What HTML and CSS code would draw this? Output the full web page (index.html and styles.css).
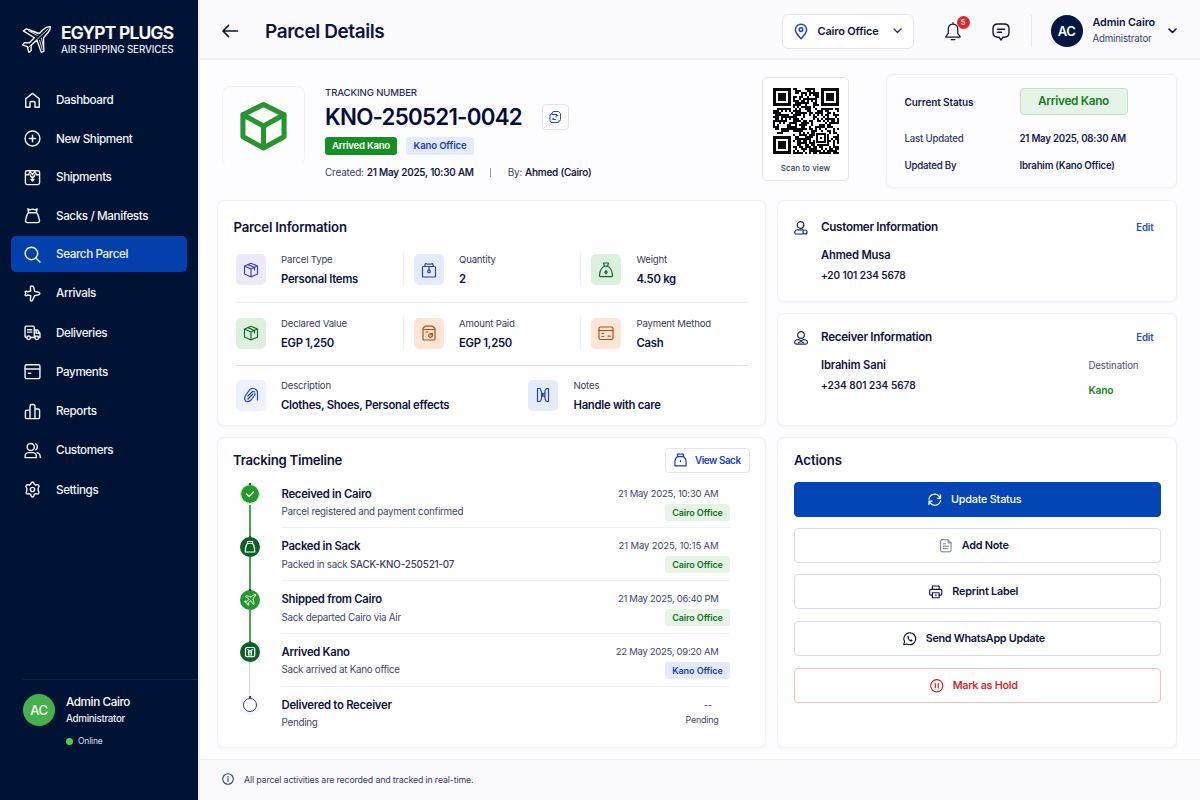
FILE: index.html
```
<!DOCTYPE html>
<html lang="en">
<head>
<meta charset="utf-8">
<title>Parcel Details</title>
<link rel="stylesheet" href="styles.css">
</head>
<body>
<div class="app">
  <aside class="sidebar">
    <div class="brand">
      <svg class="brand-logo" viewBox="0 0 92 90"><path class="w4" d="M87 4Q74 4 64 14L53 25L14 11L4 17L38 38L22 54L7 53L2 60L16 65L21 83L28 78L28 61L46 46L59 83L67 80L66 38L80 22Q88 13 87 4Z"/><path class="w3" d="M80 11L18 70M20 17L47 31M54 46L62 74M26 18L50 26M60 40L65 66"/></svg>
      <div class="brand-text">
        <div class="brand-name">EGYPT PLUGS</div>
        <div class="brand-sub">AIR SHIPPING SERVICES</div>
      </div>
    </div>
    <nav class="nav">
      <a class="nav-item"><svg class="icon" viewBox="0 0 24 24"><path d="M2.500 9.500 12 2l9.500 7.500V21.500h-6V15a1.500 1.500 0 0 0-1.500-1.500h-4A1.500 1.500 0 0 0 8.500 15v6.500h-6z"/></svg>Dashboard</a>
      <a class="nav-item"><svg class="icon" viewBox="0 0 24 24"><circle cx="12" cy="12" r="10.500"/><path d="M12 7.500v9M7.500 12h9"/></svg>New Shipment</a>
      <a class="nav-item"><svg class="icon" viewBox="0 0 24 24"><rect x="2" y="2.500" width="20" height="19.500" rx="2.500"/><path d="M2.500 8h4l2-4.500M21.500 8h-4l-2-4.500M8.500 3.500 12 8l3.500-4.500M9 8.500c0 2.500 1 3 3 3s3-.5 3-3M12 12v5M10 14.500l2 2.500 2-2.500"/></svg>Shipments</a>
      <a class="nav-item"><svg class="icon" viewBox="0 0 24 24"><path d="M5.500 2.500 8 4l4-1 4 1 2.500-1.500-1 5.500h-11zM6.500 8C5 9 3.500 12 2 19.500Q2 22 4.500 22h15q2.500 0 2.500-2.500C20.500 12 19 9 17.500 8"/></svg>Sacks / Manifests</a>
      <a class="nav-item active"><svg class="icon" viewBox="0 0 24 24"><circle cx="10.500" cy="10.500" r="8.800"/><path d="m16.800 16.800 5.700 5.700"/></svg>Search Parcel</a>
      <a class="nav-item"><svg class="icon" viewBox="0 0 24 24"><path d="M9.500 8.500 9 4Q9 1.500 11 1.500t3 2.500l1 5 4.500.800Q22.500 10.500 22.500 12t-3 2.200L15 15l-2.500 5.500Q11.800 22.500 10.300 22.500T9 20.500L9.500 15 5 14.200 3 15.500 1.500 14.500 2.500 12 1.500 9.500 3 8.500l2 1z"/></svg>Arrivals</a>
      <a class="nav-item"><svg class="icon" viewBox="0 0 24 24"><path d="M3.500 19H3a1.500 1.500 0 0 1-1.500-1.500V5A2 2 0 0 1 3.500 3h9a2 2 0 0 1 2 2v14H9.500M14.500 8.500h4.500L22.500 13v6h-1.500M5 8h6M5 11.500h6M17 9v4h5"/><circle cx="6.500" cy="19.500" r="2.500"/><circle cx="18" cy="19.500" r="2.500"/></svg>Deliveries</a>
      <a class="nav-item"><svg class="icon" viewBox="0 0 24 24"><rect x="1.500" y="2.500" width="21" height="19.500" rx="2"/><path d="M2 8.500h20M6.500 14.500h3"/></svg>Payments</a>
      <a class="nav-item"><svg class="icon" viewBox="0 0 24 24"><path d="M8.500 22V4.500a2.500 2.500 0 0 1 2.500-2.500h2a2.500 2.500 0 0 1 2.500 2.500V22M8.500 10H4a2 2 0 0 0-2 2v8.500A1.500 1.500 0 0 0 3.500 22h17a1.500 1.500 0 0 0 1.500-1.500V10.500A2 2 0 0 0 20 8.500h-4.500"/></svg>Reports</a>
      <a class="nav-item"><svg class="icon" viewBox="0 0 24 24"><circle cx="9.500" cy="7" r="5"/><path d="M1.500 22q-.5-7 5-7h6q5.500 0 5 7zM16.500 2.500a5 5 0 0 1 0 8.500M18.500 15q4.500 1 4.500 7"/></svg>Customers</a>
      <a class="nav-item"><svg class="icon" viewBox="0 0 24 24"><path d="M9.500 4.500Q10 1.500 12 1.500t2.500 3l2 1.200q3-1.200 4.200.300t-.7 4.500v3q2 2.500.8 4t-4.300.3l-2 1.200q-.5 3.500-2.500 3.500t-2.500-3.500l-2-1.200q-3 1.200-4.200-.300T4 13.500v-3q-2-2.500-.8-4.200t4.300-.6z"/><circle cx="12" cy="12" r="3"/></svg>Settings</a>
    </nav>
    <div class="side-user">
      <div class="avatar avatar-green">AC</div>
      <div>
        <div class="side-name">Admin Cairo</div>
        <div class="side-role">Administrator</div>
        <div class="side-online"><span class="dot"></span>Online</div>
      </div>
    </div>
  </aside>

  <div class="page">
    <header class="topbar">
      <svg class="back" viewBox="0 0 16 14"><path d="M15.500 7H1M6.500 1.500 1 7l5.500 5.500"/></svg>
      <h1 class="title">Parcel Details</h1>
      <div class="select">
        <svg class="pin" viewBox="0 0 14 17"><path d="M7 1.200a5.600 5.600 0 0 0-5.600 5.600C1.400 10.600 5 13 7 15.800 9 13 12.600 10.600 12.600 6.800A5.600 5.600 0 0 0 7 1.200z"/><circle cx="7" cy="6.600" r="1.800"/></svg>
        <span>Cairo Office</span>
        <svg class="chev" viewBox="0 0 9 6"><path d="m1 1 3.500 3.500L8 1"/></svg>
      </div>
      <div class="bell-wrap">
        <svg class="bell" viewBox="0 0 18 20"><path d="M9 2.200C5.500 2.200 4 4.800 4 8v4L1.500 15.500v.5h15v-.5L14 12V8c0-3.200-1.500-5.800-5-5.800zM9 .7v1.500M7 18.500h4"/></svg>
        <span class="badge">5</span>
      </div>
      <svg class="chat" viewBox="0 0 18 18"><path d="M6 1h6q5 0 5 4.500v4q0 4.500-4.500 4.700L11 14.200 9 17l-2-2.800H6Q1 14 1 9.500v-4Q1 1 6 1zM5.500 6.200h7M5.500 9.300h4"/></svg>
      <div class="who">
        <div class="avatar avatar-navy">AC</div>
        <div>
          <div class="who-name">Admin Cairo</div>
          <div class="who-role">Administrator</div>
        </div>
        <svg class="chev dark" viewBox="0 0 9 6"><path d="m1 1 3.500 3.500L8 1"/></svg>
      </div>
    </header>

    <section class="hero">
      <div class="box-icon"><svg viewBox="0 0 48 50"><path d="M24 3 45 13.500V36L24 47.500 3 36V13.500zM3 13.500l21 11.500 21-11.500M24 25v22"/></svg></div>
      <div class="hero-main">
        <div class="hero-label">TRACKING NUMBER</div>
        <div class="hero-number"><span>KNO-250521-0042</span>
          <div class="copy"><svg viewBox="0 0 14 14"><path d="M4 3.500Q4 1.500 6 1.500h4.500l2 2v6q0 1.500-1.500 2M4 3.500 2 5v5.500q0 1.500 1.500 2h6q1.500 0 1.500-1.500M4 4.500h4.500M5 9.500V8M5 9.500h2.500M8 7V5.500h2"/></svg></div>
        </div>
        <div class="hero-tags"><span class="tag-solid">Arrived Kano</span><span class="tag-blue">Kano Office</span></div>
        <div class="hero-meta"><span class="muted">Created:</span><b class="created">21 May 2025, 10:30 AM</b><i class="bar"></i><span class="muted">By:</span><b>Ahmed (Cairo)</b></div>
      </div>
      <div class="qr-card">
        <svg id="qr" class="qr" viewBox="0 0 66 66"></svg>
        <div class="qr-label">Scan to view</div>
      </div>
      <div class="status-card">
        <div class="status-key strong">Current Status</div><div class="status-pill">Arrived Kano</div>
        <div class="status-key">Last Updated</div><div class="status-val">21 May 2025, 08:30 AM</div>
        <div class="status-key by">Updated By</div><div class="status-val">Ibrahim (Kano Office)</div>
      </div>
    </section>

    <main class="content">
      <div class="col-left">
        <section class="card info">
          <h2>Parcel Information</h2>
          <div class="info-row r1">
            <div class="cell"><div class="tile violet"><svg viewBox="0 0 16 16"><path d="M8 1.200 14.500 4v8L8 15 1.500 12V4zM1.500 4 8 7l6.500-3M8 7v8M5 2.600 11.500 5.500v2.500"/></svg></div><div><div class="k">Parcel Type</div><div class="v">Personal Items</div></div></div>
            <div class="cell"><div class="tile blue"><svg viewBox="0 0 16 16"><path d="M2.500 4.500h11q1 0 1 1V14q0 1-1 1h-11q-1 0-1-1V5.500q0-1 1-1zM3.500 4.500 4.500 1.500l2 .7h3l2-.7 1 3M8 4.500V8"/><circle cx="8" cy="9.500" r="1.300"/></svg></div><div><div class="k">Quantity</div><div class="v">2</div></div></div>
            <div class="cell"><div class="tile green"><svg viewBox="0 0 16 16"><path d="M5.500 1h5l-1 3.200h-3zM6.500 4.200C3 5.500 2 9 1.500 13q-.1 1.700 1.300 1.700h10.400q1.400 0 1.300-1.700C14 9 13 5.500 9.500 4.200zM8 8.500l1.200 1.800L8 11.500l-1.200-1.200z"/></svg></div><div><div class="k">Weight</div><div class="v">4.50 kg</div></div></div>
          </div>
          <div class="info-row r2">
            <div class="cell"><div class="tile green"><svg viewBox="0 0 16 16"><path d="M8 1.200 14.500 4v8L8 15 1.500 12V4zM1.500 4 8 7l6.500-3M8 7v8M5 2.600 11.500 5.500v2.500"/></svg></div><div><div class="k">Declared Value</div><div class="v">EGP 1,250</div></div></div>
            <div class="cell"><div class="tile orange"><svg viewBox="0 0 16 16"><path d="M2 3.500 4 1.200h7.500l2.500 2.300V14q0 1-1 1H3q-1 0-1-1zM2 4.500h12M5 7h2M11.500 8.500H9.500q-1.800.3-1.800 2t1.800 2l2-1.500v-2l-2 1"/></svg></div><div><div class="k">Amount Paid</div><div class="v">EGP 1,250</div></div></div>
            <div class="cell"><div class="tile orange"><svg viewBox="0 0 16 16"><rect x="1" y="2" width="14" height="12.500" rx="1.500"/><path d="M1 5.500h14M4 8.500h1.500M4 11.500h1.500M10 11.200h2"/></svg></div><div><div class="k">Payment Method</div><div class="v">Cash</div></div></div>
          </div>
          <div class="info-row r3">
            <div class="cell"><div class="tile pale"><svg viewBox="0 0 16 16"><path d="M2.500 8.500 6.500 3Q8.500 1 10.500 1.500 14.500 2.500 14.500 6v7M12 6.500V8L8 13q-2.500 2.500-5 1.200-2.500-2-.5-5.700M5 9l4.500-4.500L12 5M5 12l5-5"/></svg></div><div><div class="k">Description</div><div class="v">Clothes, Shoes, Personal effects</div></div></div>
            <div class="cell"><div class="tile blue"><svg viewBox="0 0 16 16"><path d="M2.500 1.500h2.500l1.500 3V12l-1.500 2.500H2.500zM13.500 1.500H11.500L10 3.500V12l1.500 2.500h2zM6.500 6 8 7.500 10 5.500M6.500 10 8 8.500 10 10"/></svg></div><div><div class="k">Notes</div><div class="v">Handle with care</div></div></div>
          </div>
        </section>

        <section class="card timeline">
          <div class="tl-head"><h2>Tracking Timeline</h2>
            <div class="view-sack"><svg viewBox="0 0 14 15"><path d="M4.200 3.800 3.500 1.500Q5.200.3 7 1.300q1.800-1 3.500.2l-.7 2.300zM4.200 3.800Q1 5 1 10v3.800h12V10Q13 5 9.800 3.800M7 8v1.200"/></svg>View Sack</div>
          </div>
          <div class="tl-list">
            <div class="tl-row"><div class="mark halo"><svg viewBox="0 0 20 20"><path d="m6.500 10 2.500 2.500 4.500-4.500"/></svg></div><div class="tl-text"><div class="v">Received in Cairo</div><div class="s">Parcel registered and payment confirmed</div></div><div class="tl-side"><div class="date">21 May 2025, 10:30 AM</div><div class="chip">Cairo Office</div></div></div>
            <div class="tl-row"><div class="mark deep"><svg viewBox="0 0 20 20"><path d="M7.500 6.500v-2h5v2zM7.500 6.500Q5.500 8 5.300 15h9.400Q14.500 8 12.500 6.500"/></svg></div><div class="tl-text"><div class="v">Packed in Sack</div><div class="s">Packed in sack <em>SACK-KNO-250521-07</em></div></div><div class="tl-side"><div class="date d15">21 May 2025, 10:15 AM</div><div class="chip">Cairo Office</div></div></div>
            <div class="tl-row"><div class="mark"><svg viewBox="0 0 20 20"><path class="solid" d="M15.300 4.700q-1.600-.3-2.800 1L11.300 7 6 5.700l-.8.9 4 2.500-2 2.200-2.200-.3-.6.700 2.400 1.300 1.300 2.400.7-.6-.3-2.200 2.200-2 2.500 4 .9-.8L12.900 8.600 14.300 7.400q1.300-1.200 1-2.700z"/></svg></div><div class="tl-text"><div class="v">Shipped from Cairo</div><div class="s">Sack departed Cairo via Air</div></div><div class="tl-side"><div class="date d40">21 May 2025, 06:40 PM</div><div class="chip">Cairo Office</div></div></div>
            <div class="tl-row"><div class="mark deep last"><svg viewBox="0 0 20 20"><rect x="5.500" y="5.500" width="9.200" height="9.200" rx="1.500"/><path d="M7.500 7.500 10 9l2.500-1.500M8.500 9.500v3.500h3V9.500M10 9v2"/></svg></div><div class="tl-text"><div class="v">Arrived Kano</div><div class="s">Sack arrived at Kano office</div></div><div class="tl-side"><div class="date d40">22 May 2025, 09:20 AM</div><div class="chip kano">Kano Office</div></div></div>
            <div class="tl-row"><div class="mark open"></div><div class="tl-text"><div class="v">Delivered to Receiver</div><div class="s">Pending</div></div><div class="tl-side"><div class="date dash">--</div><div class="pend">Pending</div></div></div>
          </div>
        </section>
      </div>

      <div class="col-right">
        <section class="card person">
          <svg class="p-icon" viewBox="0 0 14 14"><circle cx="6.500" cy="4" r="3.300"/><path d="M8.500 13H1.500Q.3 12.500.8 10.500 1.500 8.500 4 8.800h5"/><circle cx="11" cy="11" r="2"/></svg>
          <div class="p-body"><h3>Customer Information</h3><div class="p-name">Ahmed Musa</div><div class="p-phone">+20 101 234 5678</div></div>
          <div class="p-side"><a class="edit">Edit</a></div>
        </section>
        <section class="card person second">
          <svg class="p-icon" viewBox="0 0 14 14"><circle cx="7" cy="4" r="3.300"/><path d="M4.500 8.500Q7 10.500 9.500 8.500q4 .3 4 3-.2 1.700-2 1.700h-9Q.7 13 .6 11.500q0-2.700 3.900-3zM4.500 11.700 7 10.500l2.500 1.200"/></svg>
          <div class="p-body"><h3>Receiver Information</h3><div class="p-name">Ibrahim Sani</div><div class="p-phone p2">+234 801 234 5678</div></div>
          <div class="p-side"><a class="edit">Edit</a><div class="dest">Destination</div><div class="dest-val">Kano</div></div>
        </section>
        <section class="card actions">
          <h2>Actions</h2>
          <div class="btn primary"><svg viewBox="0 0 14 14"><path d="M1 6.500A6 6 0 0 1 12 4l.8 1.500M13 7.500A6 6 0 0 1 2 10L1.200 8.500M13 2v3.500H9.800M1 12V8.500h3.200"/></svg>Update Status</div>
          <div class="btn note"><svg viewBox="0 0 14 14"><path d="M3 .8h6.500L12.500 4v8q0 1.300-1.300 1.300H3Q1.700 13.300 1.700 12V2Q1.700.8 3 .8zM9.500 1v3h3M4.500 5h2.500M4.500 7.500h5.500M4.500 10h4.500"/></svg>Add Note</div>
          <div class="btn"><svg viewBox="0 0 14 14"><path d="M3.500 4.500V1h7v3.500M3.500 10.500H2Q.7 10.500.7 9V6Q.7 4.500 2.200 4.500h9.600q1.500 0 1.500 1.500v3q0 1.500-1.300 1.500h-1.500M3.500 8h7v5.200h-7zM6.500 10.500h1"/></svg>Reprint Label</div>
          <div class="btn wide"><svg viewBox="0 0 14 14"><path d="M.8 13.200l.8-3.200A6.200 6.200 0 1 1 4 12.400z"/><path class="fill" d="M4.600 4.500 5.500 4l1 1.800-.6.900 1.500 1.500 1-.6 1.600 1-.5 1q-1.500.8-3.500-1T4.600 4.500z"/></svg>Send WhatsApp Update</div>
          <div class="btn hold"><svg viewBox="0 0 14 14"><circle cx="7" cy="7" r="6.300"/><path d="M5.500 4.800v4.400M8.500 4.800v4.400"/></svg>Mark as Hold</div>
        </section>
      </div>
    </main>

    <footer class="footer"><svg viewBox="0 0 12 12"><circle cx="6" cy="6" r="5.300"/><path d="M6 5.300v3.200M6 3.300v.7"/></svg><span>All parcel activities are recorded and tracked in real-time.</span></footer>
  </div>
</div>
<script src="qr.js"></script>
</body>
</html>
```

FILE: styles.css
```
* { box-sizing: border-box; }
body {
  margin: 0;
  font-family: Inter, "Liberation Sans", sans-serif;
  color: #0d1442;
  background: #fdfdff;
}
svg {
  display: block;
  flex: none;
  fill: none;
  stroke: currentColor;
  stroke-linecap: round;
  stroke-linejoin: round;
  overflow: visible;
}
h1, h2, h3 { margin: 0; }
.app { display: flex; width: 1200px; height: 800px; overflow: hidden; white-space: nowrap; }

/* sidebar */
.sidebar {
  width: 198px;
  flex: none;
  display: flex;
  flex-direction: column;
  background: #001335;
  color: #fff;
}
.brand { display: flex; height: 81px; padding: 21.500px 0 0 22px; gap: 9px; }
.brand-logo { width: 30px; height: 32px; margin-top: 2px; }
.brand-logo .w4 { stroke-width: 4; }
.brand-logo .w3 { stroke-width: 2.5; }
.brand-name { font-size: 17.300px; line-height: 21px; font-weight: 600; letter-spacing: -0.700px; -webkit-text-stroke: 0.200px; }
.brand-sub { font-size: 9.800px; line-height: 13px; font-weight: 500; letter-spacing: -0.120px; color: #e3e8f5; }
.nav { display: flex; flex-direction: column; padding: 0 11px; }
.nav-item {
  display: flex;
  align-items: center;
  gap: 15px;
  height: 36px;
  margin-top: 2.500px;
  padding-left: 13px;
  border-radius: 5px;
  font-size: 11.700px;
  font-weight: 500;
  letter-spacing: -0.410px;
  color: #f1f4fb;
}
.nav-item:first-child { margin-top: 1px; }
.nav-item:nth-child(n+6) { margin-top: 3.300px; }
.nav-item.active { background: #0340ac; }
.icon { width: 17px; height: 17px; stroke-width: 2; }
.side-user {
  display: flex;
  gap: 11px;
  margin: auto 0 0 23px;
  height: 121px;
  padding-top: 14px;
  border-top: 1px solid #0b2450;
}
.avatar {
  display: flex;
  align-items: center;
  justify-content: center;
  flex: none;
  width: 32px;
  height: 32px;
  border-radius: 50%;
  color: #fff;
  font-size: 13px;
  font-weight: 500;
  letter-spacing: -0.400px;
}
.avatar-green { background: #45b04c; }
.avatar-navy { background: #001744; font-weight: 600; }
.side-name { font-size: 11.700px; line-height: 16px; font-weight: 500; letter-spacing: -0.400px; }
.side-role { font-size: 9.800px; line-height: 14px; margin-top: 2px; font-weight: 500; letter-spacing: -0.330px; color: #e9edf7; }
.side-online { display: flex; align-items: center; gap: 5px; margin-top: 9px; font-size: 8.500px; line-height: 13px; letter-spacing: -0.180px; color: #d8deee; }
.dot { width: 7px; height: 7px; border-radius: 50%; background: #45cf5a; }

/* top bar */
.page { flex: 1; display: flex; flex-direction: column; min-width: 0; border-left: 2px solid #eef1f7; }
.topbar {
  display: flex;
  align-items: center;
  height: 60px;
  padding: 0 23px 0 22px;
  border-bottom: 2px solid #eceef5;
  background: #fbfbfe;
}
.back { width: 16px; height: 14px; margin-top: 4px; stroke-width: 1.700; color: #0a1040; }
.title { margin: 6px auto 0 27px; font-size: 19px; line-height: 24px; font-weight: 600; letter-spacing: -0.420px; }
.select {
  display: flex;
  align-items: center;
  width: 132px;
  height: 35px;
  margin-top: 4px;
  padding: 0 11px 0 11px;
  border: 1px solid #e2e5ef;
  border-radius: 6px;
  background: #fff;
  font-size: 11px;
  font-weight: 600;
  letter-spacing: -0.190px;
}
.pin { width: 14px; height: 17px; stroke-width: 1.500; color: #1747c4; }
.select span { margin: 0 auto 0 10px; }
.chev { width: 9px; height: 6px; stroke-width: 1.300; color: #2a3157; }
.chev.dark { color: #0a0f33; stroke-width: 1.600; margin-left: 13px; }
.bell-wrap { position: relative; margin: 5px 0 0 30px; }
.bell { width: 18px; height: 19px; stroke-width: 1.300; color: #10163c; }
.badge {
  position: absolute;
  top: -6.500px;
  left: 13px;
  width: 13px;
  height: 13px;
  border-radius: 50%;
  background: #e12424;
  color: #fff;
  font-size: 7.500px;
  line-height: 13px;
  font-weight: 600;
  text-align: center;
}
.chat { width: 18px; height: 18px; margin: 6px 0 0 30px; stroke-width: 1.400; color: #10163c; }
.who {
  display: flex;
  align-items: center;
  height: 32px;
  margin: 4px 0 0 21px;
  padding-left: 19px;
  border-left: 1px solid #e6e8f0;
}
.who .avatar { margin-right: 10px; }
.who-name { font-size: 10.800px; line-height: 16px; font-weight: 600; letter-spacing: -0.130px; }
.who-role { font-size: 9.700px; line-height: 16px; letter-spacing: -0.190px; color: #39426b; }

/* hero */
.hero { display: flex; height: 140px; padding: 14px 23px 0 22px; }
.box-icon {
  width: 83px;
  height: 79px;
  margin-top: 12px;
  padding: 14px 0 0 17px;
  border: 1px solid #f1f2f8;
  border-bottom-color: transparent;
  border-radius: 8px;
}
.box-icon svg { width: 47px; height: 50px; stroke-width: 5.200; color: #24962b; }
.hero-main { padding: 11px 0 0 20px; }
.hero-label { font-size: 9.600px; line-height: 15px; font-weight: 500; letter-spacing: -0.110px; color: #262f5a; }
.hero-number { display: flex; align-items: center; height: 27px; margin-top: 3px; font-size: 22.300px; font-weight: 600; letter-spacing: -0.740px; gap: 20px; color: #050b3c; }
.copy { display: flex; align-items: center; justify-content: center; width: 27px; height: 26px; border: 1px solid #dfe3f1; border-radius: 4px; }
.copy svg { width: 14px; height: 14px; stroke-width: 1; color: #2a4aa8; }
.hero-tags { display: flex; gap: 9px; margin-top: 7px; }
.tag-solid, .tag-blue { height: 18px; border-radius: 3px; font-size: 9.600px; line-height: 18px; font-weight: 600; text-align: center; }
.tag-solid { width: 72px; background: #149122; color: #fff; letter-spacing: -0.240px; }
.tag-blue { width: 68px; background: #e4ebfd; color: #1740bd; letter-spacing: -0.160px; }
.hero-meta { display: flex; align-items: center; height: 16px; margin-top: 9px; font-size: 10px; letter-spacing: -0.220px; }
.hero-meta b { font-weight: 500; margin-left: 3px; -webkit-text-stroke: 0.150px; }
.muted { color: #39436d; }
.bar { width: 1px; height: 9px; margin: 0 16.500px; background: #8f96b0; }
.qr-card {
  display: flex;
  flex-direction: column;
  align-items: center;
  width: 87px;
  height: 104px;
  margin: 3px 37px 0 auto;
  padding-top: 10px;
  border: 1px solid #e2e5ee;
  border-radius: 5px;
  background: #fff;
}
.qr { width: 66px; height: 66px; fill: #0a0a0c; stroke: none; }
.qr-label { margin-top: 8px; font-size: 8px; line-height: 12px; font-weight: 500; letter-spacing: 0.060px; color: #343e66; }
.status-card {
  display: grid;
  grid-template-columns: 115px 1fr;
  grid-template-rows: 27px 47px 7px;
  align-items: center;
  align-content: start;
  width: 291px;
  height: 114px;
  padding: 13px 0 0 17.500px;
  border: 1px solid #eff0f8;
  border-radius: 7px;
  box-shadow: 0 1px 3px rgba(40, 50, 110, 0.040);
  font-size: 9.700px;
}
.status-key { font-weight: 500; letter-spacing: -0.220px; color: #323c68; }
.status-key.strong { font-weight: 600; font-size: 10px; letter-spacing: -0.100px; color: #141b4a; }
.status-key.by { color: #1b2453; -webkit-text-stroke: 0.100px; }
.status-pill { width: 108px; height: 27px; border: 1px solid #bfe3c1; border-radius: 4px; background: #e5f4e6; color: #15801d; font-size: 11.800px; line-height: 25px; font-weight: 600; letter-spacing: -0.320px; text-align: center; }
.status-val { font-weight: 600; letter-spacing: -0.230px; color: #141b4a; }

/* cards */
.content { display: flex; gap: 11px; padding: 0 23px 0 16.500px; height: 559px; }
.col-left { width: 549px; display: flex; flex-direction: column; gap: 11px; }
.col-right { flex: 1; display: flex; flex-direction: column; }
.card { border: 1px solid #f0f1f9; border-radius: 7px; background: #fefefe; box-shadow: 0 1px 3px rgba(50, 60, 130, 0.050); }
h2 { font-size: 13.200px; line-height: 16px; font-weight: 600; letter-spacing: -0.190px; color: #0d1442; }
.info { height: 226px; padding: 18px 16px 0 16px; }
.info-row { display: grid; grid-template-columns: 178px 177.500px 1fr; margin: 0 1px 0 2px; }
.info-row + .info-row { border-top: 1px solid #eceef6; }
.r1 { height: 67px; padding-top: 17px; }
.r2 { height: 62.500px; padding-top: 12.500px; }
.info-row.r3 { grid-template-columns: 292.500px 1fr; padding-top: 12px; border-color: #dfe2ee; }
.cell { position: relative; display: flex; gap: 15.500px; }
.r1 .cell:not(:last-child)::after,
.r2 .cell:not(:last-child)::after { content: ""; position: absolute; right: 10px; top: 0; width: 1px; height: 34px; background: #f1f2f9; }
.tile { display: flex; align-items: center; justify-content: center; width: 30px; height: 31px; margin-top: 2px; border-radius: 5px; }
.tile svg { width: 16px; height: 16px; stroke-width: 1.200; }
.violet { background: #ece9fb; color: #3b45b8; }
.blue { background: #e4ecfc; color: #1f45b0; }
.pale { background: #edf2fe; color: #1f45b0; }
.green { background: #dcf1dd; color: #136a26; }
.orange { background: #fde6d6; color: #bd4a10; }
.k { font-size: 9.600px; line-height: 15px; letter-spacing: -0.180px; color: #333d67; }
.v { font-size: 11.300px; line-height: 17px; font-weight: 600; letter-spacing: -0.280px; color: #0d1442; }
.k + .v { margin-top: 4px; }

/* timeline */
.timeline { height: 311px; }
.tl-head { display: flex; justify-content: space-between; padding: 9.500px 15px 0 15.500px; height: 37.500px; }
.tl-head h2 { margin-top: 4px; letter-spacing: -0.260px; }
.view-sack { display: flex; align-items: center; gap: 8px; width: 85px; height: 25px; padding-left: 8.500px; border: 1px solid #e0e3f0; border-radius: 4px; background: #fff; font-size: 9.900px; font-weight: 600; letter-spacing: -0.460px; color: #1740bd; }
.view-sack svg { width: 13px; height: 14px; stroke-width: 1.300; }
.tl-list { margin: 0 34.500px 0 22.500px; }
.tl-row { display: flex; height: 52.800px; }
.mark { position: relative; display: flex; align-items: center; justify-content: center; width: 20px; height: 20px; margin: 8.500px 21.500px 0 0; border-radius: 50%; background: #23992b; color: #fff; }
.mark::before { content: ""; position: absolute; top: 20px; left: 9px; width: 2px; height: 33px; background: #41ab49; }
.mark::after { content: ""; position: absolute; top: -1px; left: 9px; width: 2px; height: 2px; background: #14602a; }
.mark svg { width: 20px; height: 20px; stroke-width: 1.200; }
.mark .solid { fill: #23992b; stroke-width: 0.900; }
.mark.halo { border: 1px solid #b5e4b8; background-clip: padding-box; }
.mark.halo::before { left: 8px; }
.mark.halo::after { left: 8px; top: -2px; }
.mark.deep { background: #0b6024; }
.mark.last::before { width: 1px; background: #d2d5e2; height: 36px; }
.mark.open { width: 14px; height: 14px; margin: 11px 24.500px 0 3px; border: 1.500px solid #3b4469; background: #fff; box-shadow: 0 0 0 3px #f3f4fc; }
.mark.open::before { display: none; }
.mark.open::after { left: 5px; top: -3px; height: 2px; width: 1.500px; background: #3b4469; }
.tl-text { flex: 1; padding-top: 10px; border-bottom: 1px solid #f0f1f8; }
.tl-side { padding-top: 10px; border-bottom: 1px solid #f0f1f8; display: flex; flex-direction: column; align-items: flex-end; }
.tl-row:last-child > .tl-text,
.tl-row:last-child > .tl-side { border-bottom-color: transparent; }
.s { margin-top: 1.500px; font-size: 9.800px; line-height: 16px; letter-spacing: -0.260px; color: #3e4871; }
.s em { font-style: normal; font-weight: 500; letter-spacing: -0.150px; color: #38426c; }
.date { margin-right: 11.500px; font-size: 9.500px; line-height: 16px; letter-spacing: -0.210px; color: #3e4871; }
.date.d15 { letter-spacing: -0.130px; }
.date.d40 { letter-spacing: -0.290px; }
.date.dash { margin-right: 18px; }
.chip { width: 65px; height: 17px; margin-top: 2px; border-radius: 3px; background: #e4f5e5; color: #167126; font-size: 9px; line-height: 17px; font-weight: 600; letter-spacing: -0.110px; text-align: center; }
.chip.kano { background: #e2eafd; color: #1740bd; letter-spacing: -0.070px; }
.pend { margin: 0.500px 11.500px 0 0; font-size: 9px; line-height: 14px; letter-spacing: -0.260px; color: #3e4871; }

/* people */
.person { display: flex; height: 102px; padding: 18px 22.500px 0 16.500px; }
.person.second { height: 113px; margin-top: 11px; padding-top: 15px; }
.p-icon { width: 14px; height: 14px; margin: 2px 13px 0 0; stroke-width: 1.200; color: #1c2960; }
.p-body { flex: 1; }
h3 { font-size: 11.700px; line-height: 17px; font-weight: 600; letter-spacing: -0.330px; }
.p-name { margin-top: 11px; font-size: 11.200px; line-height: 16px; font-weight: 600; letter-spacing: -0.180px; }
.p-phone { margin-top: 5px; font-size: 10.200px; line-height: 15px; font-weight: 500; letter-spacing: -0.130px; -webkit-text-stroke: 0.150px; }
.p-phone.p2 { letter-spacing: -0.050px; margin-top: 4.500px; }
.p-side { width: 65px; display: flex; flex-direction: column; }
.edit { align-self: flex-end; font-size: 9.700px; line-height: 17px; font-weight: 600; letter-spacing: -0.130px; color: #1e50cc; }
.dest { margin-top: 12px; font-size: 9.700px; line-height: 16px; letter-spacing: -0.140px; color: #4a547b; }
.dest-val { margin-top: 8px; font-size: 10.300px; line-height: 17px; font-weight: 600; letter-spacing: -0.200px; color: #148a20; }

/* actions */
.actions { height: 311px; margin-top: 11px; padding: 13.500px 15px 0 16px; }
.actions h2 { letter-spacing: -0.100px; margin-left: 0.500px; }
.btn { display: flex; align-items: center; justify-content: center; gap: 9.500px; height: 34.500px; margin-top: 11.500px; padding-right: 7px; border: 1px solid #d9dce8; border-radius: 4px; font-size: 10.800px; font-weight: 600; letter-spacing: -0.210px; }
h2 + .btn { margin-top: 14.500px; }
.btn svg { width: 13.500px; height: 13.500px; stroke-width: 1.200; }
.btn svg .fill { fill: currentColor; stroke: none; }
.btn.primary { background: #0345b5; border-color: #0345b5; color: #fff; font-weight: 500; padding-right: 5px; }
.btn.note svg { color: #6b7391; stroke-width: 1; }
.btn.wide { margin-top: 12.500px; letter-spacing: -0.280px; }
.btn.hold { margin-top: 12.500px; border-color: #f5bfc2; color: #cf1f26; font-weight: 500; letter-spacing: -0.250px; -webkit-text-stroke: 0.150px; }

.footer { display: flex; align-items: center; gap: 10px; height: 41px; padding: 0 0 2px 22px; border-top: 1px solid #e8eaf2; background: #fafafd; font-size: 8.800px; letter-spacing: -0.140px; color: #333d67; }
.footer svg { width: 12px; height: 12px; stroke-width: 1.100; color: #2b4480; }
```

FILE: qr.js
```
// Draws the QR symbol on a 33-unit grid of 2px modules.
(function () {
  var svg = document.getElementById('qr');
  var d = '';
  var box = function (x, y, w, h) { d += 'M' + x + ' ' + y + 'h' + w + 'v' + h + 'h' + -w + 'z'; };
  var seed = 42;
  var rnd = function () { seed = (seed * 1103515245 + 12345) % 2147483648; return seed / 2147483648; };
  for (var r = 0; r < 33; r++) {
    for (var c = 0; c < 33; c++) {
      var finder = (r < 10 && (c < 10 || c > 22)) || (r > 22 && c < 10);
      var align = r >= 22 && r <= 27 && c >= 21 && c <= 26;
      if (!finder && !align && rnd() < 0.6) box(c * 2, r * 2, 2, 2);
    }
  }
  // Concentric square: frame of thickness t around a solid core.
  var ring = function (x, y, s, t, core) {
    box(x, y, s, t); box(x, y + s - t, s, t);
    box(x, y + t, t, s - 2 * t); box(x + s - t, y + t, t, s - 2 * t);
    box(x + (s - core) / 2, y + (s - core) / 2, core, core);
  };
  ring(0, 0, 18, 3, 8);
  ring(48, 0, 18, 3, 8);
  ring(0, 48, 18, 3, 8);
  ring(43, 45, 10, 2, 2);
  var path = document.createElementNS('http://www.w3.org/2000/svg', 'path');
  path.setAttribute('d', d);
  svg.appendChild(path);
})();
```
